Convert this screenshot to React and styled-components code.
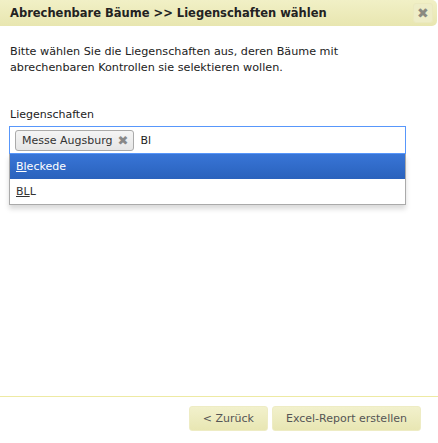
import styled, { createGlobalStyle } from "styled-components";

const GlobalStyle = createGlobalStyle`
  html, body {
    margin: 0;
    padding: 0;
    background: #fff;
  }
  #root {
    height: 443px;
  }
`;

const Dialog = styled.div`
  display: flex;
  flex-direction: column;
  height: 443px;
  width: 438px;
  font-family: "DejaVu Sans", Verdana, sans-serif;
  font-size: 11px;
  color: #222;
`;

const TitleBar = styled.div`
  display: flex;
  align-items: center;
  justify-content: space-between;
  height: 26px;
  width: 437px;
  box-sizing: border-box;
  padding: 0 4px 0 10px;
  background: linear-gradient(#f1f0c6, #e8e6b0);
  border-bottom-right-radius: 5px;
  border-top-right-radius: 5px;
`;

const Title = styled.span`
  font-weight: bold;
  font-size: 11.5px;
  color: #222;
`;

const CloseButton = styled.button`
  width: 20px;
  height: 20px;
  padding: 0;
  display: flex;
  align-items: center;
  justify-content: center;
  background: #eeedc7;
  border: 1px solid #ebe9bf;
  border-radius: 3px;
  color: #8a8a80;
  font-size: 14px;
  line-height: 1;
  cursor: pointer;
`;

const Content = styled.div`
  flex: 1;
  padding: 18px 10px 0 9px;
`;

const Intro = styled.p`
  margin: 0 0 0 1px;
  line-height: 16px;
  font-size: 11.2px;
`;

const Label = styled.div`
  margin: 32px 0 0 1px;
  line-height: 14px;
  height: 18px;
`;

const SelectBox = styled.div`
  position: relative;
  width: 397px;
`;

const Choices = styled.div`
  display: flex;
  align-items: center;
  gap: 6px;
  height: 28px;
  box-sizing: border-box;
  padding: 0 5px;
  border: 1px solid #5897fb;
  background: #fff;
`;

const Chip = styled.span`
  display: inline-flex;
  align-items: center;
  gap: 5px;
  height: 21px;
  box-sizing: border-box;
  padding: 0 5px 0 6px;
  border: 1px solid #aaa;
  border-radius: 3px;
  background: linear-gradient(#f4f4f4, #e6e6e6);
  color: #333;
`;

const ChipClose = styled.span`
  color: #888;
  font-size: 13px;
  line-height: 1;
`;

const Typed = styled.span`
  color: #222;
`;

const Results = styled.ul`
  position: absolute;
  left: 0;
  right: 0;
  top: 28px;
  margin: 0;
  padding: 0;
  list-style: none;
  border: 1px solid #aaa;
  border-top: none;
  background: #fff;
  box-shadow: 0 4px 5px rgba(0, 0, 0, 0.15);
`;

const Result = styled.li`
  height: 25px;
  display: flex;
  align-items: center;
  padding-left: 6px;
  color: ${(p) => (p.$active ? "#fff" : "#333")};
  background: ${(p) =>
    p.$active ? "linear-gradient(#3875d7, #2a62bc)" : "transparent"};
`;

const Match = styled.span`
  text-decoration: underline;
`;

const Footer = styled.div`
  display: flex;
  justify-content: flex-end;
  gap: 4px;
  height: 47px;
  box-sizing: border-box;
  padding: 9px 17px 0 0;
  border-top: 1px solid #eeeaa3;
`;

const Button = styled.button`
  height: 25px;
  padding: 0 ${(p) => p.$pad || 12}px;
  font-family: "DejaVu Sans", Verdana, sans-serif;
  font-size: 11px;
  color: #555;
  background: linear-gradient(#f2f1cc, #e8e6b3);
  border: 1px solid #eeecc4;
  border-radius: 3px;
  cursor: pointer;
`;

const options = [
  { name: "Bleckede", active: true },
  { name: "BLL", active: false },
];

export default function App() {
  return (
    <Dialog>
      <GlobalStyle />
      <TitleBar>
        <Title>Abrechenbare Bäume &gt;&gt; Liegenschaften wählen</Title>
        <CloseButton>✖</CloseButton>
      </TitleBar>
      <Content>
        <Intro>
          Bitte wählen Sie die Liegenschaften aus, deren Bäume mit
          <br />
          abrechenbaren Kontrollen sie selektieren wollen.
        </Intro>
        <Label>Liegenschaften</Label>
        <SelectBox>
          <Choices>
            <Chip>
              Messe Augsburg <ChipClose>✖</ChipClose>
            </Chip>
            <Typed>Bl</Typed>
          </Choices>
          <Results>
            {options.map((o) => (
              <Result key={o.name} $active={o.active}>
                <Match>{o.name.slice(0, 2)}</Match>
                {o.name.slice(2)}
              </Result>
            ))}
          </Results>
        </SelectBox>
      </Content>
      <Footer>
        <Button $pad={13}>&lt; Zurück</Button>
        <Button $pad={13}>Excel-Report erstellen</Button>
      </Footer>
    </Dialog>
  );
}
